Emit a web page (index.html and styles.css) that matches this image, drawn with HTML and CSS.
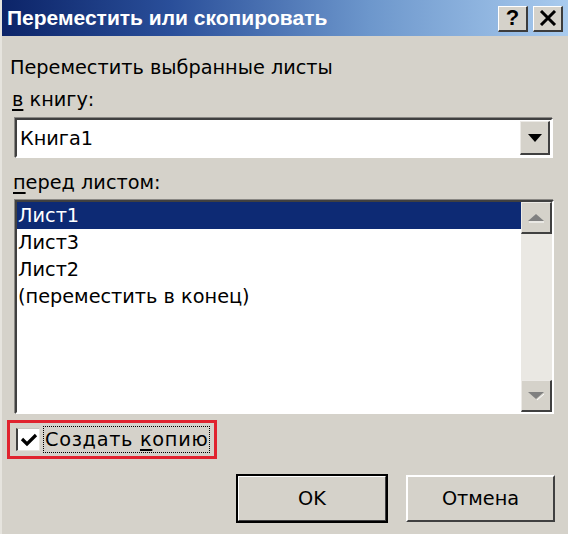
FILE: index.html
```html
<!DOCTYPE html>
<html lang="ru">
<head>
<meta charset="utf-8">
<title>Переместить или скопировать</title>
<link rel="stylesheet" href="styles.css">
</head>
<body>
<div class="window">
  <div class="titlebar">
    <span class="title">Переместить или скопировать</span>
    <div class="tbuttons">
      <span class="tbtn">?</span>
      <span class="tbtn">
        <svg width="18" height="16" viewBox="0 0 18 16"><path d="M2 1 L16 15 M16 1 L2 15" stroke="#000" stroke-width="3" fill="none"/></svg>
      </span>
    </div>
  </div>
  <div class="content">
    <div class="label l1">Переместить выбранные листы</div>
    <div class="label l2"><u>в</u> книгу:</div>
    <div class="combo">
      <span class="combo-text">Книга1</span>
      <span class="combo-btn">
        <svg width="14" height="8" viewBox="0 0 14 8"><path d="M0 0 H14 L7 8 Z" fill="#000"/></svg>
      </span>
    </div>
    <div class="label l3"><u>п</u>еред листом:</div>
    <div class="listbox">
      <div class="items">
        <div class="item selected">Лист1</div>
        <div class="item">Лист3</div>
        <div class="item">Лист2</div>
        <div class="item">(переместить в конец)</div>
      </div>
      <div class="scrollbar">
        <span class="sbtn">
          <svg width="18" height="10" viewBox="0 0 18 10"><path d="M9 1 L17 8 H1 Z" fill="#808080"/><path d="M2 9 H17" stroke="#fff" stroke-width="1"/></svg>
        </span>
        <span class="track"></span>
        <span class="sbtn">
          <svg width="18" height="10" viewBox="0 0 18 10"><path d="M1 1 H17 L9 8 Z" fill="#808080"/><path d="M10 9 L17 3" stroke="#fff" stroke-width="1"/></svg>
        </span>
      </div>
    </div>
    <div class="checkrow">
      <div class="highlight">
        <span class="checkbox">
          <svg width="18" height="16" viewBox="0 0 18 16"><path d="M2 7 L7 12 L16 3" stroke="#000" stroke-width="3.2" fill="none"/></svg>
        </span>
        <span class="checklabel">Создать <u>к</u>опию</span>
      </div>
    </div>
    <div class="buttons">
      <span class="btn default">OK</span>
      <span class="btn">Отмена</span>
    </div>
  </div>
</div>
</body>
</html>
```
FILE: styles.css
```css
html, body {
  margin: 0;
  padding: 0;
  background: #d5d2ca;
}
body {
  width: 568px;
  height: 534px;
  overflow: hidden;
  font-family: "DejaVu Sans", Verdana, sans-serif;
  font-size: 19.3px;
  color: #000;
}
.window {
  width: 568px;
  height: 534px;
  background: #d5d2ca;
  border-left: 2px solid #e6e4de;
  box-sizing: border-box;
}
.titlebar {
  height: 36px;
  background: linear-gradient(to right, #0c2468 0%, #2a4f9a 30%, #6d97cc 65%, #a9cbee 100%);
  display: flex;
  align-items: center;
  justify-content: space-between;
  padding: 0 5px 0 5px;
}
.title {
  color: #fff;
  font-family: "Liberation Sans", Arial, sans-serif;
  font-weight: bold;
  font-size: 21px;
}
.tbuttons {
  display: flex;
  gap: 5px;
  margin-top: 1px;
}
.tbtn {
  width: 30px;
  height: 26px;
  box-sizing: border-box;
  background: #d5d2ca;
  border-top: 1px solid #fff;
  border-left: 1px solid #fff;
  border-right: 2px solid #3c3c3c;
  border-bottom: 2px solid #3c3c3c;
  display: flex;
  align-items: center;
  justify-content: center;
  font-family: "Liberation Sans", Arial, sans-serif;
  font-weight: bold;
  font-size: 22px;
  line-height: 1;
}
.content {
  padding: 20px 0 0 8px;
}
.label {
  height: 24px;
  line-height: 24px;
}
.l1 { margin-bottom: 8px; }
.l2 { margin-bottom: 6px; padding-left: 2px; }
.l3 { margin-top: 13px; margin-bottom: 5px; padding-left: 3px; }
u { text-decoration-thickness: 2px; text-underline-offset: 3px; }

.combo {
  margin-left: 5px;
  width: 538px;
  height: 40px;
  box-sizing: border-box;
  background: #fff;
  border-top: 2px solid #404040;
  border-left: 2px solid #404040;
  border-right: 2px solid #fff;
  border-bottom: 2px solid #fff;
  box-shadow: -1px -1px 0 #8a8884;
  display: flex;
  align-items: center;
  justify-content: space-between;
  padding-left: 3px;
}
.combo-btn {
  width: 30px;
  height: 34px;
  margin-right: 1px;
  box-sizing: border-box;
  background: #d5d2ca;
  border-top: 1px solid #eceae6;
  border-left: 1px solid #eceae6;
  border-right: 2px solid #404040;
  border-bottom: 2px solid #404040;
  display: flex;
  align-items: center;
  justify-content: center;
}
.listbox {
  margin-left: 5px;
  width: 539px;
  height: 214px;
  box-sizing: border-box;
  background: #fff;
  border-top: 2px solid #404040;
  border-left: 2px solid #404040;
  border-right: 2px solid #fff;
  border-bottom: 2px solid #fff;
  box-shadow: -1px -1px 0 #8a8884;
  display: flex;
}
.items {
  flex: 1;
}
.item {
  height: 27px;
  line-height: 27px;
  padding-left: 1px;
}
.item.selected {
  background: #0d2a74;
  color: #fff;
}
.scrollbar {
  width: 31px;
  display: flex;
  flex-direction: column;
}
.sbtn {
  height: 32px;
  box-sizing: border-box;
  background: #d5d2ca;
  border-top: 1px solid #eceae6;
  border-left: 1px solid #eceae6;
  border-right: 2px solid #404040;
  border-bottom: 2px solid #404040;
  display: flex;
  align-items: center;
  justify-content: center;
}
.track {
  flex: 1;
  background: #eae8e3;
}
.checkrow {
  margin-top: 6px;
  display: flex;
}
.highlight {
  margin-left: -3px;
  width: 210px;
  height: 39px;
  box-sizing: border-box;
  border: 3px solid #e0232e;
  display: flex;
  align-items: center;
  padding-left: 6px;
  gap: 3px;
}
.checkbox {
  width: 24px;
  height: 23px;
  box-sizing: border-box;
  background: #fff;
  border-left: 2px solid #404040;
  border-top: 1px solid #c8c6c0;
  border-right: 1px solid #e6e4de;
  border-bottom: 1px solid #e6e4de;
  display: flex;
  align-items: center;
  justify-content: center;
}
.checklabel {
  border: 1px dotted #000;
  padding: 0 1px;
  line-height: 25px;
  white-space: nowrap;
  letter-spacing: 0.7px;
}
.buttons {
  display: flex;
  justify-content: flex-end;
  gap: 19px;
  margin-top: 16px;
  padding-right: 13px;
}
.btn {
  width: 149px;
  height: 47px;
  box-sizing: border-box;
  background: #d5d2ca;
  border-top: 2px solid #fff;
  border-left: 2px solid #fff;
  border-right: 2px solid #404040;
  border-bottom: 2px solid #404040;
  display: flex;
  align-items: center;
  justify-content: center;
}
.btn.default {
  outline: 2px solid #000;
  outline-offset: -1px;
  width: 150px;
}
```
